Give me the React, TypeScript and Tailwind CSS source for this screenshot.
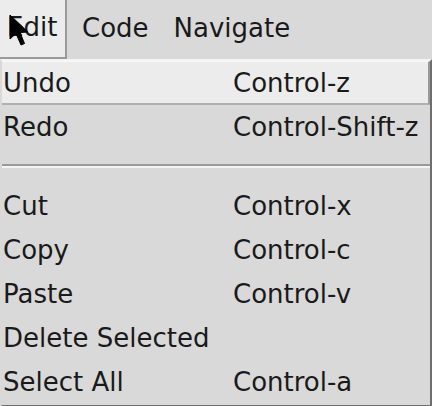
import React from "react";

const items: ({ label: string; accel?: string; active?: boolean } | null)[] = [
  { label: "Undo", accel: "Control-z", active: true },
  { label: "Redo", accel: "Control-Shift-z" },
  null,
  { label: "Cut", accel: "Control-x" },
  { label: "Copy", accel: "Control-c" },
  { label: "Paste", accel: "Control-v" },
  { label: "Delete Selected" },
  { label: "Select All", accel: "Control-a" },
];

export default function App() {
  return (
    <div
      className="relative w-[432px] h-[406px] overflow-hidden bg-[#d9d9d9] text-[26px] text-[#1a1a1a]"
      style={{ fontFamily: '"DejaVu Sans", sans-serif' }}
    >
      <div className="flex h-[59px] items-stretch">
        <div className="flex w-[67px] items-center border-b-2 border-r-2 border-b-[#9a9a9a] border-r-[#9a9a9a] bg-[#ececec] pb-[2px] pl-[7px]">
          Edit
        </div>
        <div className="flex items-center pb-[2px] pl-[15px]">Code</div>
        <div className="flex items-center pb-[2px] pl-[25px]">Navigate</div>
      </div>
      <div className="h-[348px] border-2 border-t-[#f4f4f4] border-l-[#d9d9d9] border-r-[#6e6e6e] border-b-[#6e6e6e]">
        {items.map((it, i) =>
          it === null ? (
            <div key={i} className="flex h-[35px] flex-col justify-center pb-[2px]">
              <div className="h-[2px] bg-[#9a9a9a]" />
              <div className="h-[2px] bg-[#f4f4f4]" />
            </div>
          ) : (
            <div
              key={i}
              className={
                "flex h-[44px] items-center leading-[44px] " +
                (it.active
                  ? "border-t border-t-[#f8f8f8] border-r-2 border-r-[#9a9a9a] border-b-2 border-b-[#b0b0b0] bg-[#ececec]"
                  : "")
              }
            >
              <div className="w-[231px] pl-[1px]">{it.label}</div>
              <div>{it.accel ?? ""}</div>
            </div>
          )
        )}
      </div>
      <svg
        className="absolute left-[9px] top-[14px]"
        width="20"
        height="34"
        viewBox="0 0 20 34"
      >
        <path
          d="M1 1 L1 25 L7 19.5 L12 31 L15.5 29.5 L11 18.5 L19 18 Z"
          fill="#000"
          stroke="#000"
          strokeWidth="1"
          strokeLinejoin="round"
        />
      </svg>
    </div>
  );
}
